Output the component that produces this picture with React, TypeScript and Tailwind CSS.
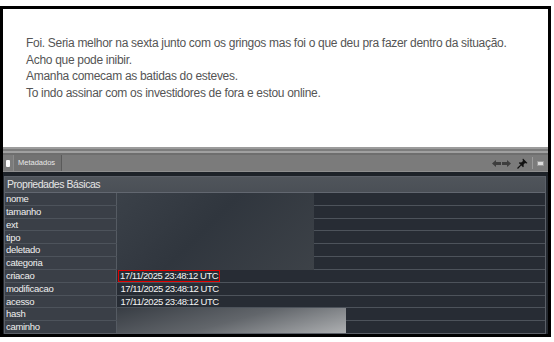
import React from "react";

const rows = [
  { k: "nome", v: "" },
  { k: "tamanho", v: "" },
  { k: "ext", v: "" },
  { k: "tipo", v: "" },
  { k: "deletado", v: "" },
  { k: "categoria", v: "" },
  { k: "criacao", v: "17/11/2025 23:48:12 UTC", red: true },
  { k: "modificacao", v: "17/11/2025 23:48:12 UTC" },
  { k: "acesso", v: "17/11/2025 23:48:12 UTC" },
  { k: "hash", v: "" },
  { k: "caminho", v: "" },
];

export default function App() {
  return (
    <div className="w-[554px] h-[342px] bg-white pt-[6px] overflow-hidden" style={{ fontFamily: '"Liberation Sans", Arial, sans-serif' }}>
      <div className="w-[551px] h-[331px] border-[3px] border-black flex flex-col bg-[#23282f]">
        {/* text area */}
        <div className="h-[138px] shrink-0 overflow-hidden bg-white pl-[23px] pt-[26px] text-[12px] leading-[16.7px] tracking-[-0.3px] text-[#555] whitespace-nowrap">
          <div>Foi. Seria melhor na sexta junto com os gringos mas foi o que deu pra fazer dentro da situação.</div>
          <div>Acho que pode inibir.</div>
          <div>Amanha comecam as batidas do esteves.</div>
          <div>To indo assinar com os investidores de fora e estou online.</div>
        </div>
        {/* separator band */}
        <div className="h-[8px] shrink-0 flex flex-col bg-[#8a8a8a]">
          <div className="h-[2px] bg-[#9c9c9c]" />
          <div className="h-[2px] bg-[#7c7c7c]" />
          <div className="h-[2px] bg-[#a0a0a0]" />
          <div className="h-[2px] bg-[#6e6e6e]" />
        </div>
        {/* tab bar */}
        <div className="h-[17px] shrink-0 bg-[#7b7b7b] flex items-stretch border-b border-[#8f8f8f]">
          <div className="w-[7px] flex items-center justify-end">
            <div className="w-[4px] h-[7px] bg-white rounded-[1px]" />
          </div>
          <div className="ml-[3px] w-[49px] bg-[#727272] border-r border-[#5a5a5a] border-l border-l-[#8a8a8a] flex items-center pl-[4px] text-[7.5px] leading-none text-[#e8e8e8]">
            Metadados
          </div>
          <div className="flex-1" />
          <div className="flex items-center gap-[1px] mr-[6px]">
            <svg width="9" height="7" viewBox="0 0 9 7"><path d="M0 3.5 L4 0 L4 2 L9 2 L9 5 L4 5 L4 7 Z" fill="#3e3e3e" /></svg>
            <svg width="9" height="7" viewBox="0 0 9 7"><path d="M9 3.5 L5 0 L5 2 L0 2 L0 5 L5 5 L5 7 Z" fill="#3e3e3e" /></svg>
          </div>
          <div className="flex items-center mr-[4px]">
            <svg width="11" height="11" viewBox="0 0 11 11">
              <path d="M6 0.5 L10.5 5 L9.5 5.5 L8 5 L6.5 6.8 L6.8 8.5 L6 9.2 L1.8 5 L2.5 4.2 L4.2 4.5 L6 3 L5.5 1.5 Z" fill="#111" />
              <path d="M3.8 7.2 L0.5 10.5" stroke="#111" strokeWidth="1.2" />
            </svg>
          </div>
          <div className="w-px bg-[#9a9a9a] my-[2px]" />
          <div className="flex items-center ml-[4px] mr-[4px]">
            <div className="w-[7px] h-[5px] bg-[#dcdcdc] border border-[#999]" />
          </div>
        </div>
        {/* dark strip */}
        <div className="h-[4px] shrink-0 bg-[#1d2228]" />
        {/* panel */}
        <div className="flex-1 min-h-0 flex pr-[2px] bg-[#23282f]">
          <div className="flex-1 min-h-0 flex flex-col border border-[#5b6068] ml-[1px] bg-[#2a2f37] relative overflow-hidden">
            <div className="h-[16px] shrink-0 bg-gradient-to-b from-[#50555b] to-[#4a4f56] border-b border-[#626770] flex items-center pl-[2px] text-[10.5px] leading-none tracking-[-0.45px] text-[#e6e6e6]">
              Propriedades Básicas
            </div>
            <div className="flex-1 min-h-0 flex flex-col">
              {rows.map((r) => (
                <div key={r.k} className="flex-1 min-h-0 basis-0 flex border-b border-[#4d535b] last:border-b-0 leading-none">
                  <div className="w-[112px] shrink-0 bg-[#3a3f47] border-r border-[#555b63] pl-[1px] flex items-center text-[9.5px] tracking-[-0.3px] text-[#f0f0f0]">
                    {r.k}
                  </div>
                  <div className="flex-1 bg-[#272c34] flex items-center pl-[1px] text-[9.5px] tracking-[-0.45px] text-[#f4f4f4]">
                    {r.v ? (
                      <span className={r.red ? "border-[1.5px] border-[#e00000] pl-[1px] pr-[1px] leading-[9.5px]" : "pl-[2.5px]"}>{r.v}</span>
                    ) : null}
                  </div>
                </div>
              ))}
            </div>
            {/* blurred redactions */}
            <div className="absolute left-[112px] top-[16px] w-[197px] h-[77px]" style={{ backgroundImage: "linear-gradient(135deg, #3b4149 0%, #30363e 45%, #3d4248 100%)" }} />
            <div className="absolute left-[112px] top-[131px] w-[229px] h-[26px]" style={{ backgroundImage: "linear-gradient(165deg, #383d44 0%, #62666b 50%, #b0b2b4 100%)" }} />
          </div>
        </div>
      </div>
    </div>
  );
}
